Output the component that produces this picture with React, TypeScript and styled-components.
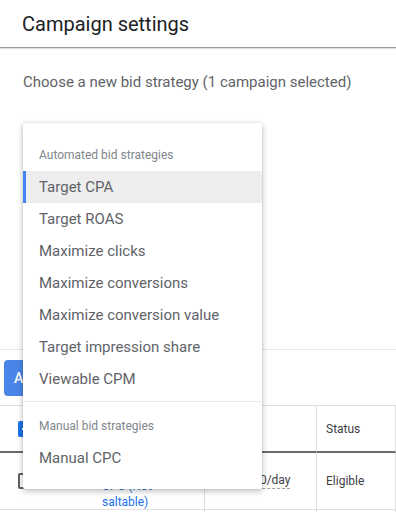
import React, { FC } from 'react';
import styled, { createGlobalStyle } from 'styled-components';

const GlobalStyle = createGlobalStyle`
  html, body {
    margin: 0;
    padding: 0;
    overflow: hidden;
    background: #fff;
  }
  body {
    font-family: Roboto, 'Liberation Sans', sans-serif;
  }
`;

const Page = styled.div`
  position: relative;
  width: 396px;
  height: 512px;
  overflow: hidden;
  background: #fff;
`;

const Header = styled.header`
  height: 47px;
  display: flex;
  align-items: center;
  padding-left: 22px;
  border-bottom: 1px solid #9a9a9a;
  box-shadow: 0 1px 1px rgba(0, 0, 0, 0.12);
`;

const Title = styled.h1`
  margin: 0;
  font-size: 20px;
  font-weight: 400;
  color: #202124;
`;

const Prompt = styled.p`
  margin: 0;
  padding: 24px 0 0 23px;
  height: 302px;
  box-sizing: border-box;
  font-size: 15px;
  line-height: 20px;
  color: #5f6368;
  border-bottom: 1px solid #e6e6e6;
`;

const ActionBar = styled.div`
  display: flex;
  align-items: center;
  padding: 10px 4px 9px;
`;

const PrimaryButton = styled.button`
  height: 36px;
  padding: 0 10px;
  border: none;
  border-radius: 4px;
  background: #4a86e8;
  color: #fff;
  font-family: inherit;
  font-size: 14px;
  font-weight: 500;
`;

const Table = styled.div`
  display: grid;
  grid-template-columns: 56px 148px 112px 80px;
  border-top: 1px solid #e0e0e0;
`;

const Cell = styled.div<{ $head?: boolean; $line?: boolean; $pad?: number }>`
  display: flex;
  align-items: center;
  box-sizing: border-box;
  height: ${p => (p.$head ? 47 : 57)}px;
  padding-left: ${p => p.$pad ?? 0}px;
  font-size: 12px;
  color: #3c4043;
  border-bottom: ${p => (p.$head ? '2px solid #6b6b6b' : '1px solid #e0e0e0')};
  border-left: ${p => (p.$line ? '1px solid #e0e0e0' : 'none')};
  &:nth-child(4n) {
    border-right: 1px solid #e0e0e0;
  }
`;

const Checkbox = styled.span<{ $checked?: boolean }>`
  display: inline-flex;
  align-items: center;
  justify-content: center;
  width: 16px;
  height: 16px;
  box-sizing: border-box;
  border-radius: 2px;
  background: ${p => (p.$checked ? '#1a73e8' : '#fff')};
  border: 2px solid ${p => (p.$checked ? '#1a73e8' : '#5f6368')};

  &::after {
    content: '';
    display: ${p => (p.$checked ? 'block' : 'none')};
    width: 8px;
    height: 2px;
    background: #fff;
  }
`;

const LinkText = styled.span`
  color: #1a73e8;
  line-height: 16px;
  margin-top: 25px;
`;

const Budget = styled.span`
  border-bottom: 1px dashed #9aa0a6;
  line-height: 15px;
`;

const Menu = styled.div`
  position: absolute;
  left: 23px;
  top: 123px;
  width: 239px;
  padding: 8px 0 15px;
  background: #fff;
  border-radius: 2px;
  box-shadow: 0 2px 6px rgba(0, 0, 0, 0.28), 0 0 2px rgba(0, 0, 0, 0.08);
`;

const GroupLabel = styled.div`
  padding: 12px 16px 4px;
  line-height: 24px;
  font-size: 12px;
  color: #80868b;
`;

const Item = styled.div<{ $active?: boolean }>`
  height: 32px;
  display: flex;
  align-items: center;
  padding-left: 16px;
  font-size: 15px;
  color: #5f6368;
  background: ${p => (p.$active ? '#eeeeee' : 'transparent')};
  box-shadow: ${p => (p.$active ? 'inset 3px 0 0 #4285f4' : 'none')};
`;

const Divider = styled.div`
  margin-top: 6px;
  border-top: 1px solid #e6e6e6;
`;

const automated = [
  'Target CPA',
  'Target ROAS',
  'Maximize clicks',
  'Maximize conversions',
  'Maximize conversion value',
  'Target impression share',
  'Viewable CPM',
];

const App: FC = () => (
  <Page>
    <GlobalStyle />
    <Header>
      <Title>Campaign settings</Title>
    </Header>
    <Prompt>Choose a new bid strategy (1 campaign selected)</Prompt>
    <ActionBar>
      <PrimaryButton>Apply</PrimaryButton>
    </ActionBar>
    <Table>
      <Cell $head $pad={18}>
        <Checkbox $checked />
      </Cell>
      <Cell $head $pad={46}>Campaign</Cell>
      <Cell $head $line $pad={18}>Budget</Cell>
      <Cell $head $line $pad={9}>Status</Cell>

      <Cell $pad={18}>
        <Checkbox />
      </Cell>
      <Cell $pad={46}>
        <LinkText>
          CPC (Not
          <br />
          saltable)
        </LinkText>
      </Cell>
      <Cell $line $pad={18}>
        <Budget>$100.00/day</Budget>
      </Cell>
      <Cell $line $pad={9}>Eligible</Cell>

      <Cell />
      <Cell />
      <Cell $line />
      <Cell $line />
    </Table>

    <Menu>
      <GroupLabel>Automated bid strategies</GroupLabel>
      {automated.map((label, i) => (
        <Item key={label} $active={i === 0}>
          {label}
        </Item>
      ))}
      <Divider />
      <GroupLabel>Manual bid strategies</GroupLabel>
      <Item>Manual CPC</Item>
    </Menu>
  </Page>
);

export default App;
